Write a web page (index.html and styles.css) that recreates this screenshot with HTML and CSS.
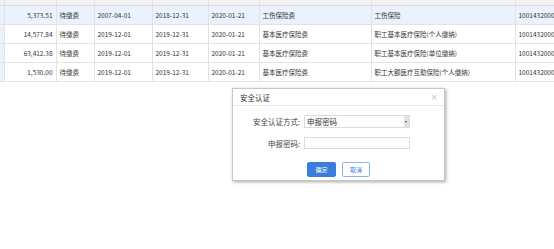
FILE: index.html
```html
<!doctype html>
<html lang="zh-CN">
<head>
  <meta charset="UTF-8" />
  <title>安全认证</title>
  <link rel="stylesheet" href="styles.css">
</head>
<body>
  <div class="grid-wrap">
    <table class="grid">
      <colgroup>
        <col style="width:4px">
        <col style="width:52px">
        <col style="width:38px">
        <col style="width:58px">
        <col style="width:56px">
        <col style="width:51px">
        <col style="width:112px">
        <col style="width:144px">
        <col style="width:60px">
      </colgroup>
      <tr class="head-row">
        <td class="fix"></td><td></td><td></td><td></td><td></td><td></td><td></td><td></td><td></td>
      </tr>
      <tr class="selected">
        <td class="fix"></td>
        <td class="num">5,373.51</td>
        <td>待缴费</td>
        <td>2007-04-01</td>
        <td>2018-12-31</td>
        <td>2020-01-21</td>
        <td>工伤保险费</td>
        <td>工伤保险</td>
        <td>1001432000</td>
      </tr>
      <tr>
        <td class="fix"></td>
        <td class="num">14,577.84</td>
        <td>待缴费</td>
        <td>2019-12-01</td>
        <td>2019-12-31</td>
        <td>2020-01-21</td>
        <td>基本医疗保险费</td>
        <td>职工基本医疗保险(个人缴纳)</td>
        <td>1001432000</td>
      </tr>
      <tr>
        <td class="fix"></td>
        <td class="num">63,412.38</td>
        <td>待缴费</td>
        <td>2019-12-01</td>
        <td>2019-12-31</td>
        <td>2020-01-21</td>
        <td>基本医疗保险费</td>
        <td>职工基本医疗保险(单位缴纳)</td>
        <td>1001432000</td>
      </tr>
      <tr>
        <td class="fix"></td>
        <td class="num">1,530.00</td>
        <td>待缴费</td>
        <td>2019-12-01</td>
        <td>2019-12-31</td>
        <td>2020-01-21</td>
        <td>基本医疗保险费</td>
        <td>职工大额医疗互助保险(个人缴纳)</td>
        <td>1001432000</td>
      </tr>
    </table>
  </div>

  <div class="dialog">
    <div class="dialog-head">
      <span class="dialog-title">安全认证</span>
      <span class="dialog-close">×</span>
    </div>
    <form class="dialog-body">
      <label class="form-label" for="auth-type">安全认证方式:</label>
      <div class="select-box">
        <select id="auth-type">
          <option>申报密码</option>
        </select>
        <span class="select-arrow"></span>
      </div>
      <label class="form-label" for="auth-pwd">申报密码:</label>
      <input type="password" id="auth-pwd" class="text-input" />
      <div class="dialog-btns">
        <button type="button" class="btn btn-primary">确定</button>
        <button type="button" class="btn btn-plain">取消</button>
      </div>
    </form>
  </div>
</body>
</html>
```

FILE: styles.css
```css
* {
  box-sizing: border-box;
  margin: 0;
  padding: 0;
}

body {
  width: 554px;
  height: 249px;
  overflow: hidden;
  background: #fff;
  font-family: "Noto Sans CJK SC", "Noto Sans", sans-serif;
  font-size: 6.5px;
  color: #333;
}

.grid-wrap {
  width: 554px;
  overflow: hidden;
}

.grid {
  border-collapse: collapse;
  table-layout: fixed;
  width: 575px;
}

.grid td {
  height: 19px;
  padding: 0 3px;
  border: 1px solid #e3e3e3;
  border-top: none;
  white-space: nowrap;
  overflow: hidden;
  vertical-align: middle;
}

.grid .head-row td {
  height: 5px;
  background: #f2f2f2;
  border-bottom: 1px solid #dcdcdc;
}

.grid td.fix {
  padding: 0;
  background: #eaf2fb;
  border-left: none;
}

.grid td.num {
  text-align: right;
}

.grid tr.selected td {
  background: #eaf3fd;
}

/* dialog over the grid */
.dialog {
  position: absolute;
  left: 232px;
  top: 88px;
  width: 213px;
  height: 93px;
  background: #fff;
  border: 1px solid #c8c8c8;
  box-shadow: 1px 1px 3px rgba(0, 0, 0, 0.35);
}

.dialog-head {
  height: 17px;
  display: flex;
  align-items: center;
  justify-content: space-between;
  padding: 0 6px 0 7px;
  border-bottom: 1px solid #e8e8e8;
}

.dialog-title {
  font-size: 7.5px;
  color: #333;
}

.dialog-close {
  font-size: 9px;
  color: #c4c4c4;
  font-family: "DejaVu Sans", sans-serif;
}

.dialog-body {
  display: grid;
  grid-template-columns: 67px 106px 1fr;
  column-gap: 4px;
  row-gap: 9px;
  padding-top: 9px;
  align-items: center;
}

.form-label {
  grid-column: 1;
  text-align: right;
  font-size: 7.5px;
  color: #444;
}

.select-box {
  position: relative;
  height: 13px;
}

.select-box select {
  width: 100%;
  height: 13px;
  appearance: none;
  border: 1px solid #dcdcdc;
  background: #fff;
  font-family: inherit;
  font-size: 7.5px;
  color: #333;
  padding: 0 8px 0 2px;
  outline: none;
}

.select-arrow {
  position: absolute;
  right: 1px;
  top: 1px;
  bottom: 1px;
  width: 5px;
  background: #dfe3e8;
}

.select-arrow::after {
  content: "";
  position: absolute;
  left: 1px;
  top: 5px;
  border-left: 1.5px solid transparent;
  border-right: 1.5px solid transparent;
  border-top: 2px solid #444;
}

.text-input {
  height: 12px;
  border: 1px solid #dcdcdc;
  background: #fff;
  outline: none;
}

.dialog-btns {
  grid-column: 1 / -1;
  display: flex;
  justify-content: center;
  gap: 6px;
  margin-top: 4px;
}

.btn {
  height: 15px;
  width: 29px;
  font-family: inherit;
  font-size: 6px;
  border-radius: 2px;
  cursor: pointer;
}

.btn-primary {
  background: #3a7ddb;
  border: 1px solid #3a7ddb;
  color: #fff;
}

.btn-plain {
  width: 28px;
  background: #fff;
  border: 1px solid #8eb4ea;
  color: #3a7ddb;
}
```
